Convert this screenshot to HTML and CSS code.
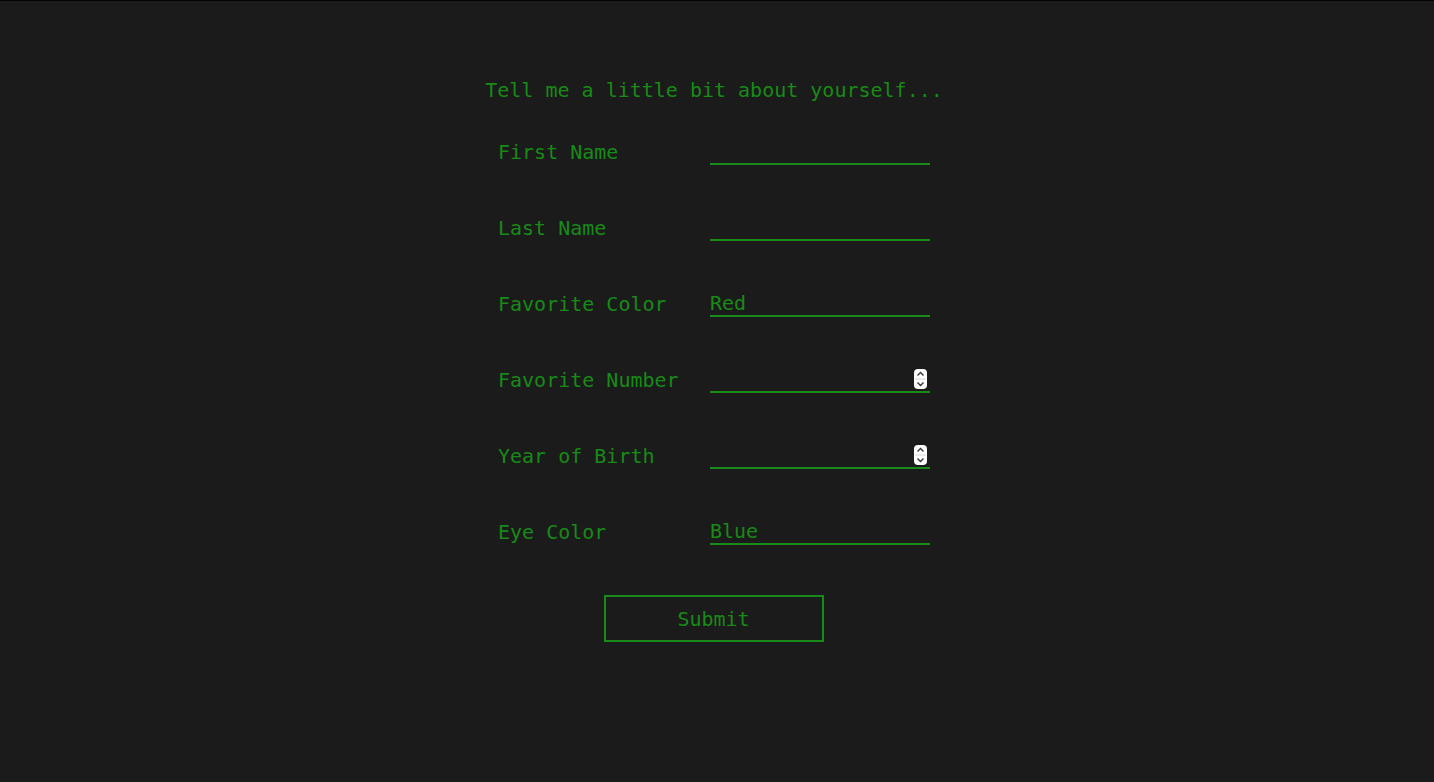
FILE: index.html
```html
<!DOCTYPE html>
<html lang="en">
<head>
<meta charset="utf-8">
<title>About you</title>
<link rel="stylesheet" href="styles.css">
</head>
<body>
<div class="page">
  <main class="column">
    <h1 class="title">Tell me a little bit about yourself...</h1>
    <form class="form">
      <div class="row">
        <label class="label" for="first">First Name</label>
        <div class="field"><input class="input" id="first" type="text"></div>
      </div>
      <div class="row">
        <label class="label" for="last">Last Name</label>
        <div class="field"><input class="input" id="last" type="text"></div>
      </div>
      <div class="row">
        <label class="label" for="color">Favorite Color</label>
        <div class="field"><input class="input" id="color" type="text" value="Red"></div>
      </div>
      <div class="row">
        <label class="label" for="num">Favorite Number</label>
        <div class="field">
          <input class="input" id="num" type="number">
          <svg class="spin" width="13" height="20" viewBox="0 0 13 20" aria-hidden="true">
            <rect x="0" y="0" width="13" height="20" rx="4" fill="#ffffff"/>
            <line x1="1" y1="10" x2="12" y2="10" stroke="#d4d4d4" stroke-width="1"/>
            <path d="M3.5 6.5 L6.5 3.5 L9.5 6.5" fill="none" stroke="#333" stroke-width="1.4"/>
            <path d="M3.5 13.5 L6.5 16.5 L9.5 13.5" fill="none" stroke="#333" stroke-width="1.4"/>
          </svg>
        </div>
      </div>
      <div class="row">
        <label class="label" for="year">Year of Birth</label>
        <div class="field">
          <input class="input" id="year" type="number">
          <svg class="spin" width="13" height="20" viewBox="0 0 13 20" aria-hidden="true">
            <rect x="0" y="0" width="13" height="20" rx="4" fill="#ffffff"/>
            <line x1="1" y1="10" x2="12" y2="10" stroke="#d4d4d4" stroke-width="1"/>
            <path d="M3.5 6.5 L6.5 3.5 L9.5 6.5" fill="none" stroke="#333" stroke-width="1.4"/>
            <path d="M3.5 13.5 L6.5 16.5 L9.5 13.5" fill="none" stroke="#333" stroke-width="1.4"/>
          </svg>
        </div>
      </div>
      <div class="row">
        <label class="label" for="eye">Eye Color</label>
        <div class="field"><input class="input" id="eye" type="text" value="Blue"></div>
      </div>
      <div class="actions">
        <button class="submit" type="button">Submit</button>
      </div>
    </form>
  </main>
</div>
</body>
</html>
```
FILE: styles.css
```css
html, body {
  margin: 0;
  padding: 0;
  background: #1b1b1b;
}

body {
  font-family: "DejaVu Sans Mono", "Liberation Mono", monospace;
  font-size: 20px;
  color: #178a17;
}

.page {
  min-height: 781px;
  border-top: 1px solid #050505;
  padding-right: 6px;
  display: flex;
  justify-content: center;
}

.column {
  display: flex;
  flex-direction: column;
  align-items: center;
  padding-top: 78px;
}

.title {
  margin: 0;
  font-size: 20px;
  font-weight: normal;
  line-height: 23px;
  white-space: nowrap;
}

.form {
  margin-top: 38px;
  display: flex;
  flex-direction: column;
  width: 432px;
}

.row {
  display: grid;
  grid-template-columns: 212px 220px;
  height: 76px;
  align-items: start;
}

.label {
  padding-top: 1px;
  line-height: 23px;
  white-space: nowrap;
}

.field {
  position: relative;
  width: 220px;
}

.input {
  box-sizing: border-box;
  display: block;
  width: 220px;
  height: 25px;
  margin: 0;
  padding: 0 0 2px;
  border: none;
  border-bottom: 2px solid #178a17;
  background: transparent;
  color: #178a17;
  font-family: inherit;
  font-size: 20px;
  line-height: 21px;
  outline: none;
  -moz-appearance: textfield;
}

.input::-webkit-inner-spin-button,
.input::-webkit-outer-spin-button {
  -webkit-appearance: none;
  margin: 0;
}

.spin {
  position: absolute;
  right: 3px;
  top: 1px;
  display: block;
}

.actions {
  display: flex;
  justify-content: center;
  margin-top: -1px;
  padding-right: 1px;
}

.submit {
  box-sizing: border-box;
  width: 220px;
  height: 47px;
  margin: 0;
  padding: 2px 0 0;
  border: 2px solid #178a17;
  background: transparent;
  color: #178a17;
  font-family: inherit;
  font-size: 20px;
  line-height: 23px;
  cursor: pointer;
}
```
